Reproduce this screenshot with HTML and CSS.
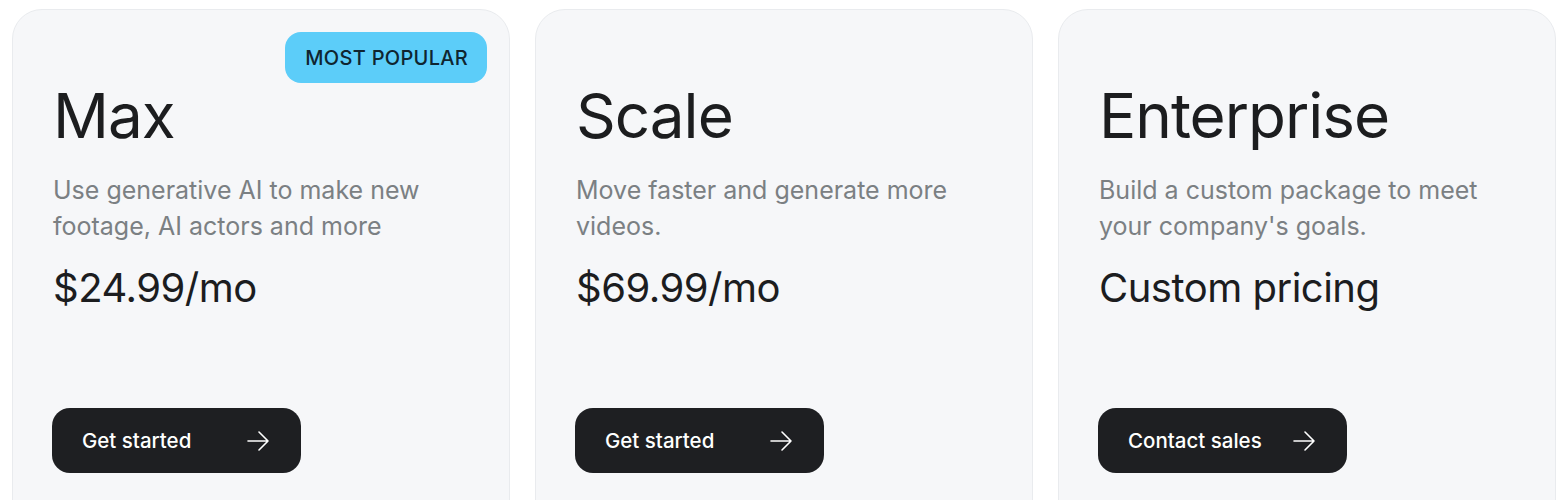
FILE: index.html
```html
<!DOCTYPE html>
<html>
  <head>
    <title>Pricing</title>
    <link rel="stylesheet" href="styles.css">
  </head>
  <body>
    <div class="plans">
      <div class="plan">
        <span class="badge">MOST POPULAR</span>
        <h2 class="plan-name">Max</h2>
        <p class="plan-desc">Use generative AI to make new footage, AI actors and more</p>
        <div class="plan-price">$24.99/mo</div>
        <a class="plan-btn" href="#">
          <span>Get started</span>
          <svg width="24" height="24" viewBox="0 0 24 24" fill="none" stroke="currentColor" stroke-width="1.6" stroke-linecap="round" stroke-linejoin="round"><path d="M2 12h20M13 3l9 9-9 9"/></svg>
        </a>
      </div>
      <div class="plan">
        <h2 class="plan-name">Scale</h2>
        <p class="plan-desc">Move faster and generate more videos.</p>
        <div class="plan-price">$69.99/mo</div>
        <a class="plan-btn" href="#">
          <span>Get started</span>
          <svg width="24" height="24" viewBox="0 0 24 24" fill="none" stroke="currentColor" stroke-width="1.6" stroke-linecap="round" stroke-linejoin="round"><path d="M2 12h20M13 3l9 9-9 9"/></svg>
        </a>
      </div>
      <div class="plan">
        <h2 class="plan-name">Enterprise</h2>
        <p class="plan-desc">Build a custom package to meet your company's goals.</p>
        <div class="plan-price">Custom pricing</div>
        <a class="plan-btn" href="#">
          <span>Contact sales</span>
          <svg width="24" height="24" viewBox="0 0 24 24" fill="none" stroke="currentColor" stroke-width="1.6" stroke-linecap="round" stroke-linejoin="round"><path d="M2 12h20M13 3l9 9-9 9"/></svg>
        </a>
      </div>
    </div>
  </body>
</html>
```

FILE: styles.css
```css
body {
  margin: 0;
  background-color: #fff;
  font-family: Inter, "Noto Sans", sans-serif;
  color: #1c1d1f;
}
.plans {
  display: grid;
  grid-template-columns: repeat(3, 498px);
  gap: 25px;
  padding: 9px 12px 0;
}
.plan {
  position: relative;
  height: 540px;
  padding: 69px 40px 0;
  background-color: #f6f7f9;
  border: 1px solid #e9ebee;
  border-radius: 30px;
  display: flex;
  flex-direction: column;
}
.badge {
  position: absolute;
  top: 22px;
  right: 22px;
  height: 51px;
  padding: 0 19px 0 20px;
  display: flex;
  align-items: center;
  background-color: #5ccdf9;
  color: #0f2530;
  border-radius: 16px;
  font-size: 20px;
  font-weight: 500;
  letter-spacing: 0.3px;
}
.plan-name {
  margin: 0;
  font-size: 62px;
  font-weight: 400;
  line-height: 1.2;
  letter-spacing: -1px;
}
.plan-desc {
  margin: 19px 0 0;
  max-width: 380px;
  font-size: 25px;
  line-height: 36px;
  color: #7b8083;
}
.plan-price {
  margin-top: 19px;
  font-size: 40px;
  line-height: 50px;
  letter-spacing: -0.5px;
}
.plan-btn {
  margin-top: 95px;
  margin-left: -1px;
  width: 249px;
  height: 65px;
  box-sizing: border-box;
  padding: 0 31px 0 30px;
  display: flex;
  align-items: center;
  justify-content: space-between;
  background-color: #1e1f22;
  color: #fff;
  border-radius: 18px;
  font-size: 20.5px;
  font-weight: 500;
  text-decoration: none;
}
```
